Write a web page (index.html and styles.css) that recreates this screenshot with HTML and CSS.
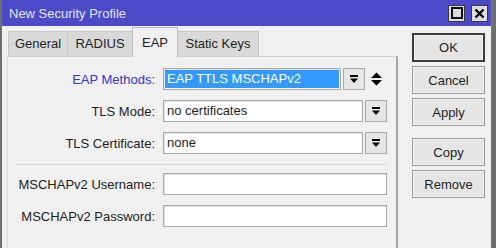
FILE: index.html
```html
<!DOCTYPE html>
<html lang="en">
<head>
  <meta charset="UTF-8">
  <title>New Security Profile</title>
  <link rel="stylesheet" href="styles.css">
</head>
<body>
  <div class="window">
    <div class="titlebar">
      <span class="title">New Security Profile</span>
      <div class="wbtns">
        <span class="wbtn"><span class="max-icon"></span></span>
        <span class="wbtn">
          <svg width="11" height="11" viewBox="0 0 11 11"><path d="M1.5 1.5 L9.5 9.5 M9.5 1.5 L1.5 9.5" stroke="#000" stroke-width="2.4"/></svg>
        </span>
      </div>
    </div>
    <div class="body">
      <div class="main">
        <div class="tabs">
          <span class="tab t-general">General</span>
          <span class="tab t-radius">RADIUS</span>
          <span class="tab t-eap active">EAP</span>
          <span class="tab t-keys">Static Keys</span>
        </div>
        <div class="panel">
          <div class="row">
            <label class="lbl blue">EAP Methods:</label>
            <div class="field short"><span class="selected">EAP TTLS MSCHAPv2</span></div>
            <span class="dd">
              <svg width="8" height="9" viewBox="0 0 8 9"><rect x="0" y="0" width="8" height="2" fill="#000"/><path d="M0 3.5 H8 L4 8 Z" fill="#000"/></svg>
            </span>
            <span class="updown">
              <svg width="11" height="14" viewBox="0 0 11 14"><path d="M0 6 H11 L5.5 0.5 Z M0 8 H11 L5.5 13.5 Z" fill="#000"/></svg>
            </span>
          </div>
          <div class="row">
            <label class="lbl">TLS Mode:</label>
            <div class="field mid">no certificates</div>
            <span class="dd">
              <svg width="8" height="9" viewBox="0 0 8 9"><rect x="0" y="0" width="8" height="2" fill="#000"/><path d="M0 3.5 H8 L4 8 Z" fill="#000"/></svg>
            </span>
          </div>
          <div class="row">
            <label class="lbl">TLS Certificate:</label>
            <div class="field mid">none</div>
            <span class="dd">
              <svg width="8" height="9" viewBox="0 0 8 9"><rect x="0" y="0" width="8" height="2" fill="#000"/><path d="M0 3.5 H8 L4 8 Z" fill="#000"/></svg>
            </span>
          </div>
          <div class="sep"></div>
          <div class="row">
            <label class="lbl">MSCHAPv2 Username:</label>
            <div class="field wide"></div>
          </div>
          <div class="row">
            <label class="lbl">MSCHAPv2 Password:</label>
            <div class="field wide"></div>
          </div>
        </div>
      </div>
      <div class="side">
        <button class="btn default">OK</button>
        <button class="btn">Cancel</button>
        <button class="btn">Apply</button>
        <button class="btn gap">Copy</button>
        <button class="btn">Remove</button>
      </div>
    </div>
  </div>
</body>
</html>
```

FILE: styles.css
```css
body {
  margin: 0;
  padding: 0;
  background: #6e6e6e;
  font-family: "Liberation Sans", Arial, sans-serif;
  font-size: 13px;
  color: #1e1e1e;
}
.window {
  margin-left: 2px;
  width: 489px;
  height: 248px;
  background: #f0f0f0;
  border-right: 1px solid #7a7a7a;
  display: flex;
  flex-direction: column;
}
.titlebar {
  height: 26px;
  background: #4b4bc9;
  display: flex;
  align-items: center;
  justify-content: space-between;
  padding: 0 3px 0 7px;
}
.title {
  color: #e4e4ff;
  font-size: 13px;
}
.wbtns {
  display: flex;
  gap: 6px;
}
.wbtn {
  width: 15px;
  height: 15px;
  background: #dcdcdc;
  border: 1px solid #3a3a3a;
  display: flex;
  align-items: center;
  justify-content: center;
}
.max-icon {
  width: 8px;
  height: 8px;
  border: 2px solid #111;
}
.body {
  flex: 1;
  display: flex;
}
.main {
  width: 396px;
  padding-left: 5px;
  box-sizing: border-box;
  display: flex;
  flex-direction: column;
}
.tabs {
  height: 30px;
  display: flex;
  align-items: flex-end;
  padding-left: 1px;
}
.tab {
  height: 24px;
  line-height: 24px;
  text-align: center;
  background: #d9d9d9;
  border: 1px solid #c6c6c6;
  border-bottom: none;
  margin-right: -1px;
}
.t-general { width: 58px; }
.t-radius { width: 64px; }
.t-eap { width: 44px; }
.t-keys { width: 80px; }
.tab.active {
  height: 29px;
  line-height: 29px;
  background: #f0f0f0;
  border-color: #bdbdbd;
  margin-bottom: -1px;
  position: relative;
  z-index: 1;
}
.panel {
  flex: 1;
  border-top: 1px solid #cfcfcf;
  border-left: 1px solid #dadada;
  border-right: 2px solid #a6a6a6;
  padding-top: 11px;
}
.row {
  display: flex;
  align-items: center;
  height: 22px;
  margin-bottom: 10px;
}
.lbl {
  width: 147px;
  text-align: right;
  margin-right: 8px;
}
.lbl.blue {
  color: #3535d6;
}
.field {
  height: 22px;
  box-sizing: border-box;
  background: #fff;
  border: 1px solid #a9a9a9;
  box-shadow: inset 1px 1px 0 #e3e3e3;
  padding: 1px 3px;
  line-height: 18px;
  white-space: nowrap;
  overflow: hidden;
}
.field.short {
  width: 178px;
  padding: 1px;
}
.field.mid {
  width: 200px;
}
.field.wide {
  width: 224px;
}
.selected {
  display: block;
  height: 18px;
  background: #3399ff;
  color: #fff;
  padding-left: 2px;
}
.dd {
  width: 22px;
  height: 22px;
  box-sizing: border-box;
  margin-left: 2px;
  background: #e6e6e6;
  border: 1px solid #ababab;
  display: flex;
  align-items: center;
  justify-content: center;
}
.updown {
  width: 22px;
  height: 22px;
  display: flex;
  align-items: center;
  justify-content: center;
}
.sep {
  height: 1px;
  background: #d6d6d6;
  margin: 1px 0 8px 8px;
  width: 371px;
}
.side {
  flex: 1;
  display: flex;
  flex-direction: column;
  align-items: flex-start;
  padding: 7px 0 0 14px;
}
.btn {
  width: 73px;
  height: 28px;
  margin-bottom: 4px;
  background: #e5e5e5;
  border: 1px solid #9a9a9a;
  box-shadow: inset 0 0 0 1px #f4f4f4;
  font-family: "Liberation Sans", Arial, sans-serif;
  font-size: 13px;
  color: #1e1e1e;
  padding: 0;
}
.btn.default {
  height: 29px;
  border: 2px solid #3c3c3c;
}
.btn.gap {
  margin-top: 8px;
}
```
